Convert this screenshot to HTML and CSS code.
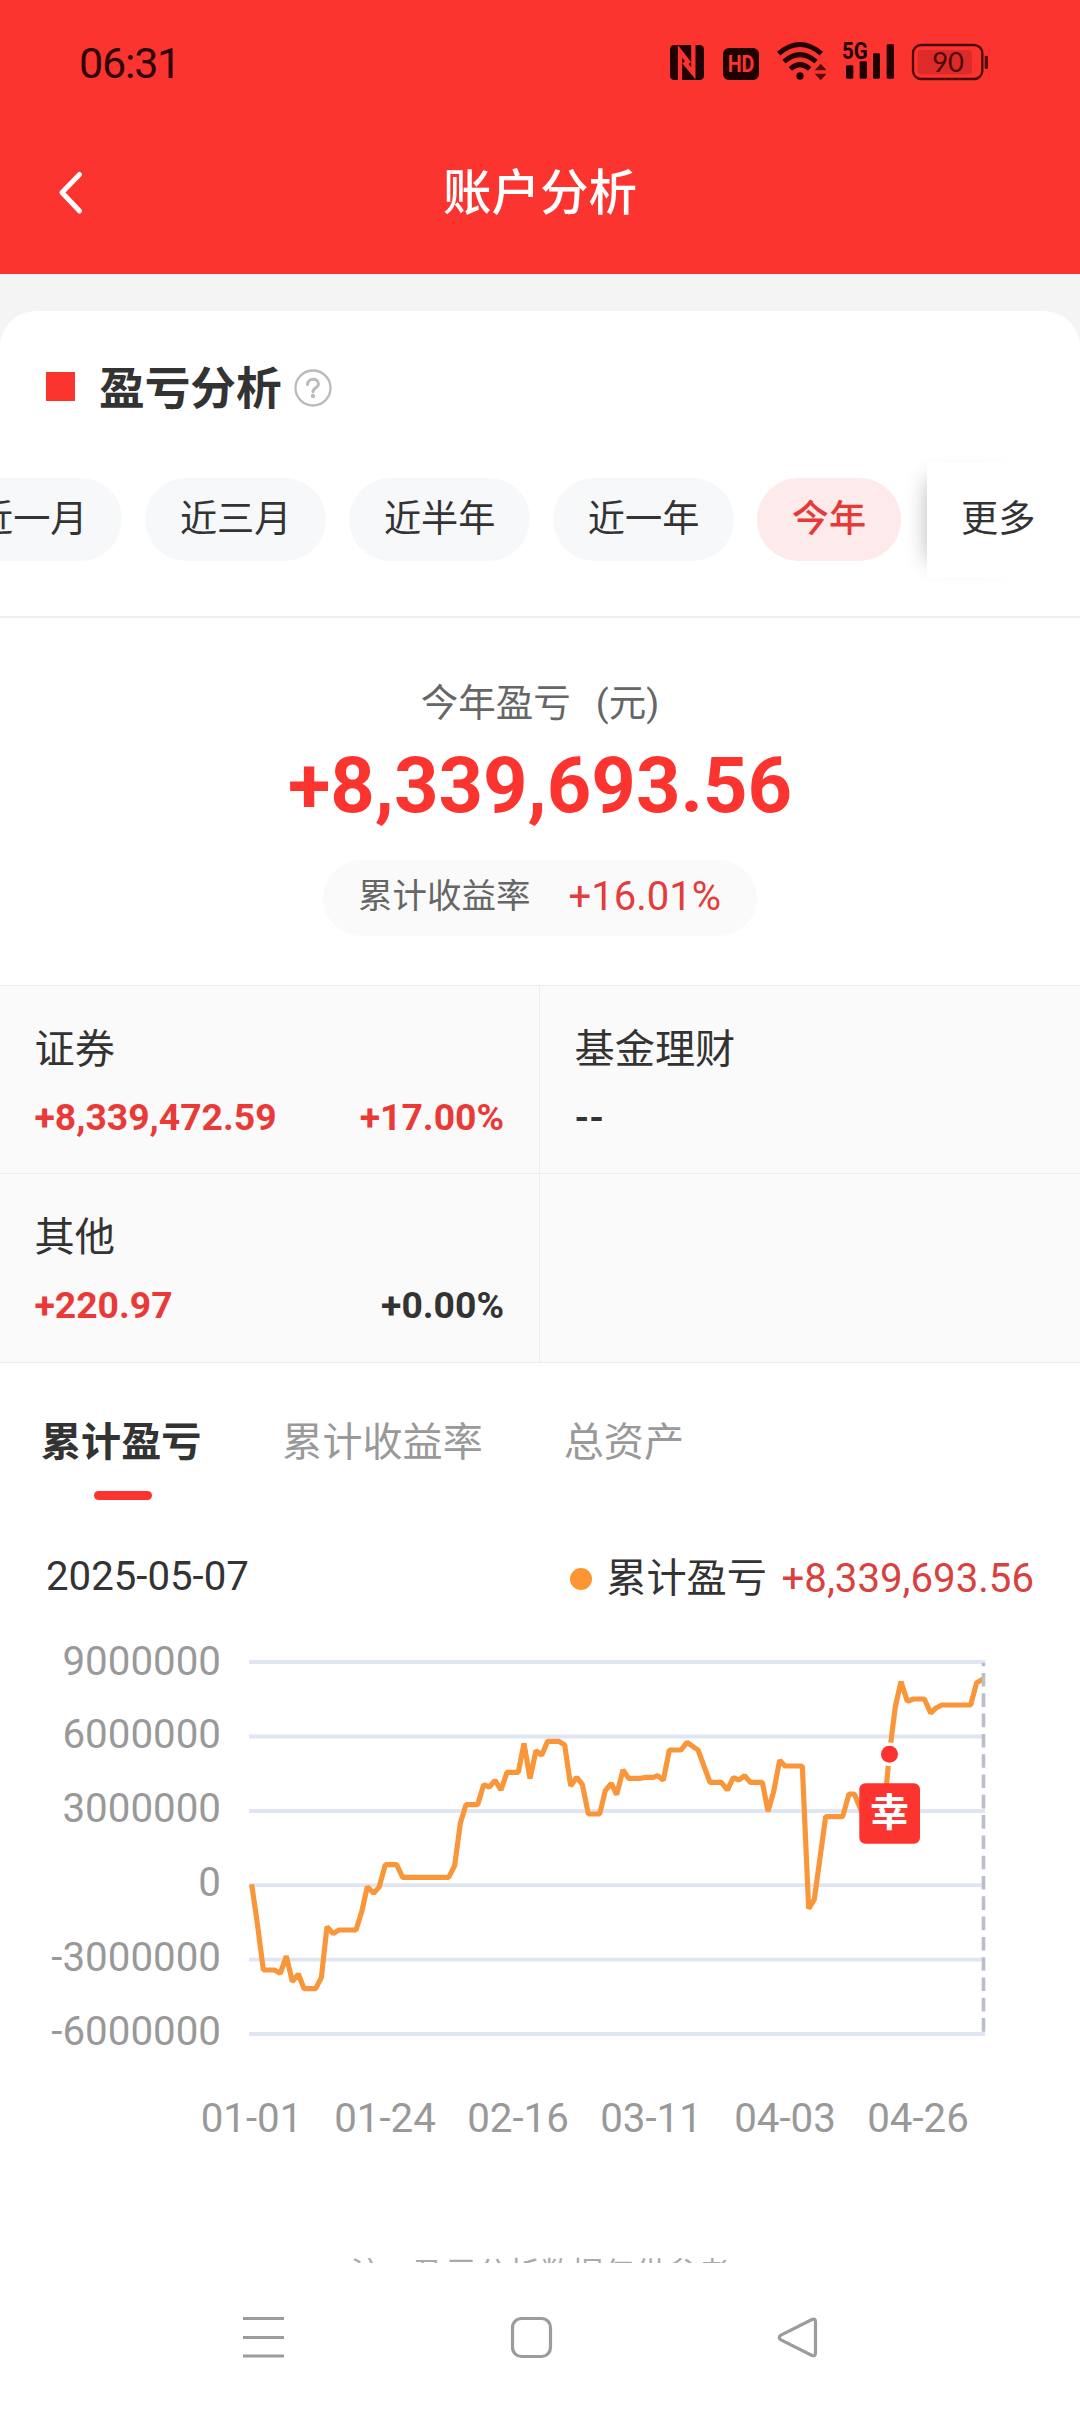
FILE: index.html
```html
<!DOCTYPE html>
<html lang="zh-CN">
<head>
<meta charset="utf-8">
<title>账户分析</title>
<link rel="stylesheet" href="styles.css">
</head>
<body>
<div class="screen">
  <header class="header">
    <div class="status">
      <span class="time">06:31</span>
      <svg class="status-icons" viewBox="0 0 1140 270">
        <rect class="ink" x="90" y="75" width="102" height="105" rx="13"/>
        <path class="cut-line" d="M120 180V94L148 130M160 75v85l-28-34"/>
        <rect class="ink" x="249" y="84" width="108" height="96" rx="18"/>
        <text class="hd" x="303" y="157" text-anchor="middle" textLength="80" lengthAdjust="spacingAndGlyphs">HD</text>
        <g class="arc">
          <path d="M416 101Q480 46 544 101"/>
          <path d="M432 125Q480 83 528 125"/>
          <path d="M451 147Q480 121 509 147"/>
        </g>
        <circle class="ink" cx="480" cy="168" r="11"/>
        <path class="dim" d="M524 151l18-20 18 20zM524 161h36l-18 20z"/>
        <text class="fiveg" x="606" y="118" textLength="77" lengthAdjust="spacingAndGlyphs">5G</text>
        <rect class="ink" x="618" y="136" width="22" height="40" rx="4"/>
        <rect class="ink" x="659" y="124" width="22" height="52" rx="4"/>
        <rect class="ink" x="699" y="100" width="21" height="76" rx="4"/>
        <rect class="ink" x="740" y="73" width="22" height="103" rx="4"/>
        <rect class="cell-outline" x="819" y="75" width="208" height="102" rx="25"/>
        <rect class="cell-fill" x="833" y="90" width="163" height="73" rx="10"/>
        <rect class="dim" x="1034" y="107" width="10" height="40" rx="4"/>
        <text class="level" x="924" y="156" text-anchor="middle">90</text>
      </svg>
    </div>
    <div class="navbar">
      <svg class="back" viewBox="0 0 28 46"><path d="M22.500 5.500L5 23.500L22.500 42"/></svg>
      <h1 class="title">账户分析</h1>
    </div>
  </header>

  <main class="content">
    <section class="card">
      <div class="section-head">
        <i class="square"></i>
        <h2 class="section-title">盈亏分析</h2>
        <svg class="help" viewBox="0 0 38 38"><circle cx="19" cy="19" r="17.500"/><path d="M13.500 15.500C13.500 8.500 24.500 8.500 24.500 15C24.500 19 19 18.500 19 22.800"/><circle class="help-dot" cx="19" cy="27" r="2.200"/></svg>
      </div>

      <div class="ranges">
        <div class="chips">
          <span class="chip">近一月</span>
          <span class="chip">近三月</span>
          <span class="chip">近半年</span>
          <span class="chip">近一年</span>
          <span class="chip active">今年</span>
        </div>
        <div class="more">更多</div>
      </div>

      <div class="summary">
        <div class="summary-label">今年盈亏<span class="unit">(元)</span></div>
        <div class="summary-value">+8,339,693.56</div>
        <div class="pill"><span class="pill-label">累计收益率</span><span class="pill-value">+16.01%</span></div>
      </div>

      <div class="grid">
        <div class="cell">
          <div class="cell-label">证券</div>
          <div class="cell-row"><b class="up">+8,339,472.59</b><b class="up">+17.00%</b></div>
        </div>
        <div class="cell">
          <div class="cell-label">基金理财</div>
          <div class="cell-row"><b>--</b></div>
        </div>
        <div class="cell">
          <div class="cell-label">其他</div>
          <div class="cell-row"><b class="up">+220.97</b><b>+0.00%</b></div>
        </div>
        <div class="cell"></div>
      </div>

      <div class="tabs">
        <span class="tab selected">累计盈亏</span>
        <span class="tab">累计收益率</span>
        <span class="tab">总资产</span>
      </div>

      <div class="legend">
        <span class="date">2025-05-07</span>
        <span class="series"><i class="dot"></i><span>累计盈亏</span><span class="series-value">+8,339,693.56</span></span>
      </div>

      <svg class="chart" viewBox="0 0 1080 520">
        <g class="gridlines">
          <path d="M249 22H985M249 96.500H985M249 171H985M249 245.200H985M249 319.600H985M249 394H985"/>
        </g>
        <g class="axis" text-anchor="end">
          <text x="221" y="35">9000000</text>
          <text x="221" y="108">6000000</text>
          <text x="221" y="182">3000000</text>
          <text x="221" y="256">0</text>
          <text x="221" y="330.500">-3000000</text>
          <text x="221" y="404.500">-6000000</text>
        </g>
        <g class="axis" text-anchor="middle">
          <text x="251.500" y="492">01-01</text>
          <text x="385" y="492">01-24</text>
          <text x="518" y="492">02-16</text>
          <text x="651" y="492">03-11</text>
          <text x="785" y="492">04-03</text>
          <text x="918" y="492">04-26</text>
        </g>
        <g transform="translate(220 0) scale(.33333)">
          <polyline class="line" points="95,733 112,850 130,990 163,990 181,1000 199,948 217,1025 235,1002 252,1046 287,1046 304,1013 321,860 339,881 357,870 408,870 426,812 442,740 461,760 478,740 496,674 530,674 548,712 686,712 704,677 721,550 738,494 773,494 791,434 808,441 825,421 843,450 861,397 895,397 912,310 930,416 948,332 965,346 983,304 1017,304 1034,315 1052,438 1070,412 1087,433 1105,522 1139,522 1156,452 1174,430 1190,464 1209,390 1226,415 1262,415 1278,412 1300,412 1313,407 1330,421 1348,330 1383,330 1401,307 1434,330 1470,427 1504,427 1522,450 1540,413 1557,420 1574,407 1591,427 1627,427 1644,514 1661,455 1679,361 1695,378 1747,378 1766,806 1783,778 1817,530 1868,530 1887,462 1903,462 1925,515 1975,520 1992,515 2008,343 2026,200 2043,125 2062,184 2080,177 2113,177 2132,219 2148,204 2166,195 2252,195 2270,128 2290,117"/>
        </g>
        <path class="cursor" d="M983.500 22.700V392"/>
        <circle class="mark-ring" cx="889.500" cy="114.300" r="11.700"/>
        <circle class="mark" cx="889.500" cy="114.300" r="8.500"/>
        <rect class="mark" x="859.300" y="143.300" width="60.700" height="60.500" rx="6"/>
        <text class="mark-text" x="889.600" y="186" text-anchor="middle">幸</text>
      </svg>

      <p class="note">注：盈亏分析数据仅供参考</p>
    </section>
  </main>

  <nav class="sysnav">
    <svg viewBox="0 0 44 44"><path d="M1 3.500H42M1 22.500H42M1 41H42"/></svg>
    <svg viewBox="0 0 44 44"><rect x="3.500" y="3.500" width="38" height="38" rx="9"/></svg>
    <svg viewBox="0 0 44 44"><path d="M36 4.500L5 20Q1.500 22.500 5 25L36 40.500Q39.500 41.500 39.500 38V7Q39.500 3 36 4.500Z"/></svg>
  </nav>
</div>
</body>
</html>
```

FILE: styles.css
```css
* { box-sizing: border-box; }

body {
  margin: 0;
  background: #fff;
  color: #333;
  font-family: Roboto, "Noto Sans CJK SC", sans-serif;
}

h1, h2, p { margin: 0; }

svg { display: block; flex: none; }

.screen {
  width: 1080px;
  height: 2412px;
  display: flex;
  flex-direction: column;
  overflow: hidden;
}

/* header */
.header {
  height: 274px;
  flex: none;
  background: #fc3430;
}

.status {
  height: 124px;
  padding: 0 60px 0 79px;
  display: flex;
  align-items: center;
  justify-content: space-between;
}

.time {
  margin-top: 2px;
  color: #2d0303;
  font-size: 43px;
  font-weight: 400;
  letter-spacing: -1.2px;
}

.status-icons { width: 380px; height: 90px; margin-top: 6px; }
.ink { fill: #200202; }
.dim { fill: #5a0c0b; }
.cut-line { fill: none; stroke: #fc3430; stroke-width: 13; }
.hd { fill: #fc3430; font-size: 74px; font-weight: 700; }
.arc { fill: none; stroke: #200202; stroke-width: 15; }
.fiveg { fill: #200202; font-size: 73px; font-weight: 700; }
.cell-outline { fill: none; stroke: #4a0807; stroke-width: 7; }
.cell-fill { fill: #dc2b29; }
.level { fill: #4a0807; font-size: 82px; font-family: Lato, sans-serif; }

.navbar {
  height: 136px;
  padding: 0 57px;
  display: grid;
  grid-template-columns: 28px 1fr 28px;
  align-items: center;
}

.back { width: 28px; height: 46px; fill: none; stroke: #fff; stroke-width: 5; stroke-linecap: round; stroke-linejoin: round; }

.title {
  padding-top: 4px;
  color: #fff;
  font-size: 48.5px;
  font-weight: 500;
  line-height: 70px;
  text-align: center;
}

/* content card */
.content {
  flex: 1;
  min-height: 0;
  padding-top: 37px;
  background: #f4f4f4;
  overflow: hidden;
}

.card {
  height: 1952px;
  padding-top: 43px;
  background: #fff;
  border-radius: 36px 36px 0 0;
  overflow: hidden;
}

.section-head {
  height: 68px;
  padding-left: 46px;
  display: flex;
  align-items: center;
}

.square { width: 29px; height: 29px; margin-bottom: 3px; background: #fc3430; }

.section-title {
  margin: 3px 0 0 24px;
  font-size: 45.7px;
  line-height: 68px;
  font-weight: 700;
}

.help { width: 38px; height: 38px; margin: 0 0 1px 12px; fill: none; stroke: #bbb; stroke-width: 2.3; }
.help path { stroke-width: 3; stroke-linecap: round; }
.help .help-dot { fill: #bbb; stroke: none; }

/* period selector */
.ranges {
  height: 156px;
  padding-right: 46px;
  margin-top: 40px;
  display: flex;
  border-bottom: 2px solid #eee;
}

.chips {
  width: 927px;
  height: 115px;
  flex: none;
  display: flex;
  align-items: center;
  justify-content: flex-end;
  gap: 22.8px;
  padding-right: 26px;
  overflow: hidden;
}

.chip {
  height: 83px;
  flex: none;
  padding: 0 34.8px;
  border-radius: 42px;
  background: #f7f8fa;
  font-size: 37.2px;
  line-height: 83px;
}

.chip.active { background: #fdeaea; color: #e63a38; font-weight: 500; }

.more {
  position: relative;
  flex: 1;
  height: 116px;
  padding-left: 34px;
  background: #fff;
  box-shadow: -16px 0 22px -18px rgba(0, 0, 0, .32);
  font-size: 37.2px;
  line-height: 115px;
  white-space: nowrap;
}

/* yearly summary */
.summary {
  height: 367px;
  padding-top: 55px;
  display: flex;
  flex-direction: column;
  align-items: center;
}

.summary-label { font-size: 37.5px; line-height: 60px; color: #666; }
.unit { margin-left: 25px; }

.summary-value {
  margin-top: 2px;
  color: #fc3430;
  font-size: 77.7px;
  font-weight: 700;
  line-height: 102px;
}

.pill {
  width: 434px;
  height: 76px;
  margin-top: 23px;
  padding: 0 36px 0 35px;
  display: flex;
  align-items: center;
  justify-content: space-between;
  border-radius: 38px;
  background: #fafafa;
  line-height: 74px;
}

.pill-label { margin-top: -5px; font-size: 34.5px; color: #666; }
.pill-value { margin-top: -2px; font-size: 40px; color: #e33c3a; }

/* asset breakdown */
.grid {
  display: grid;
  grid-template-columns: 540px 540px;
  grid-template-rows: 188px 189px;
  background: #fafafa;
  border-bottom: 1px solid #ededed;
}

.cell {
  padding: 34px 35px 0 34.5px;
  border-top: 1px solid #ededed;
  border-right: 1px solid #ededed;
}

.cell:nth-child(even) { border-right: 0; }

.cell-label { font-size: 40.2px; line-height: 60px; }

.cell-row {
  margin-top: 7px;
  display: flex;
  justify-content: space-between;
  font-size: 37.3px;
  line-height: 60px;
}

.up { color: #e93a37; }

/* chart tabs */
.tabs {
  height: 137px;
  padding: 50px 0 0 41px;
  display: flex;
  gap: 81px;
  font-size: 40.1px;
  line-height: 60px;
  color: #999;
}

.tab.selected { color: #333; font-weight: 700; }

.tab.selected::after {
  content: "";
  display: block;
  width: 58px;
  height: 9px;
  margin: 18px 0 0 53px;
  border-radius: 5px;
  background: #fc3430;
}

.legend {
  height: 60px;
  margin-top: 47px;
  padding: 0 46px;
  display: flex;
  justify-content: space-between;
  font-size: 40.2px;
  line-height: 59px;
}

.series { display: flex; align-items: center; padding-top: 3px; }
.dot { width: 22px; height: 22px; margin-right: 14px; border-radius: 50%; background: #fd9532; }
.series-value { margin-left: 14.5px; color: #d9413f; }

/* chart */
.chart { width: 1080px; height: 520px; margin-top: 33px; }
.gridlines { stroke: #e0e6f1; stroke-width: 3.8; }
.axis { fill: #999; font-size: 40.3px; }
.line { fill: none; stroke: #f9963a; stroke-width: 15.5; stroke-linejoin: bevel; }
.cursor { stroke: #b9bec9; stroke-width: 3.6; stroke-dasharray: 13.600 6.700; stroke-dashoffset: 10; }
.mark { fill: #fc3430; }
.mark-ring { fill: #fff; }
.mark-text { fill: #fff; font-size: 39px; font-weight: 700; }

.note {
  margin-top: 95px;
  font-size: 31.6px;
  line-height: 40px;
  letter-spacing: 0;
  text-align: center;
  color: #aaa;
}

/* system navigation */
.sysnav {
  height: 149px;
  flex: none;
  padding: 52px 260px 0 242px;
  display: flex;
  justify-content: space-between;
}

.sysnav svg { width: 44px; height: 44px; fill: none; stroke: #9c9c9c; stroke-width: 3.2; }
```
